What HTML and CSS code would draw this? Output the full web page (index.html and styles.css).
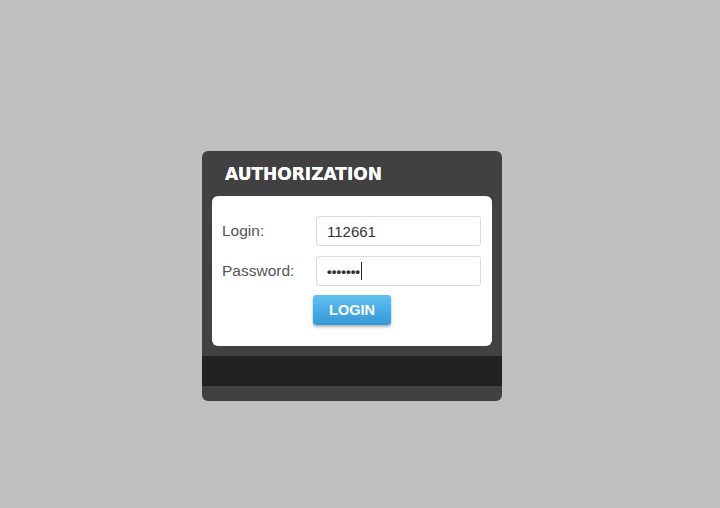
FILE: index.html
```html
<!DOCTYPE html>
<html>
<head>
<meta charset="utf-8">
<link rel="stylesheet" href="styles.css">
</head>
<body>
<div class="auth">
  <div class="auth-head">AUTHORIZATION</div>
  <div class="auth-body">
    <div class="row">
      <label class="lbl">Login:</label>
      <div class="field">112661</div>
    </div>
    <div class="row">
      <label class="lbl">Password:</label>
      <div class="field pass">•••••••<span class="caret"></span></div>
    </div>
    <div class="actions">
      <button class="btn">LOGIN</button>
    </div>
  </div>
  <div class="auth-band"></div>
  <div class="auth-foot"></div>
</div>
</body>
</html>
```

FILE: styles.css
```css
html, body {
  margin: 0;
  padding: 0;
  background: #c0c0c0;
}
body {
  padding: 151px 0 0 202px;
  font-family: "Liberation Sans", Arial, sans-serif;
}
.auth {
  width: 300px;
  background: #414141;
  border-radius: 6px;
  overflow: hidden;
}
.auth-head {
  height: 45px;
  box-sizing: border-box;
  padding: 12px 0 0 23px;
  color: #fff;
  font-family: "DejaVu Sans", Verdana, sans-serif;
  font-weight: bold;
  font-size: 17px;
  line-height: 22px;
  text-shadow: 0 0 0.5px #fff;
}
.auth-body {
  margin: 0 10px;
  height: 150px;
  box-sizing: border-box;
  background: #fff;
  border-radius: 6px;
  padding: 20px 11px 0 10px;
}
.row {
  display: flex;
  align-items: center;
  height: 30px;
  margin-bottom: 10px;
}
.lbl {
  width: 94px;
  color: #555;
  font-size: 15.5px;
}
.field {
  box-sizing: border-box;
  width: 165px;
  height: 30px;
  border: 1px solid #dcdcdc;
  border-radius: 3px;
  padding: 0 10px;
  display: flex;
  align-items: center;
  color: #333;
  font-size: 15px;
}
.pass {
  font-size: 13.5px;
  font-weight: bold;
  letter-spacing: 0;
  color: #333;
}
.caret {
  display: inline-block;
  width: 1px;
  height: 18px;
  background: #222;
  margin-left: 1px;
}
.actions {
  padding-left: 91px;
  margin-top: -1px;
}
.btn {
  width: 78px;
  height: 30px;
  border: 0;
  border-radius: 3px;
  background: linear-gradient(#5fc0f2, #3398d8);
  box-shadow: 0 2px 3px rgba(0,0,0,0.3);
  color: #fff;
  font-family: "Liberation Sans", Arial, sans-serif;
  font-weight: bold;
  font-size: 14.5px;
  padding: 0;
}
.auth-band {
  margin-top: 10px;
  height: 30px;
  background: #212121;
}
.auth-foot {
  height: 15px;
}
```
